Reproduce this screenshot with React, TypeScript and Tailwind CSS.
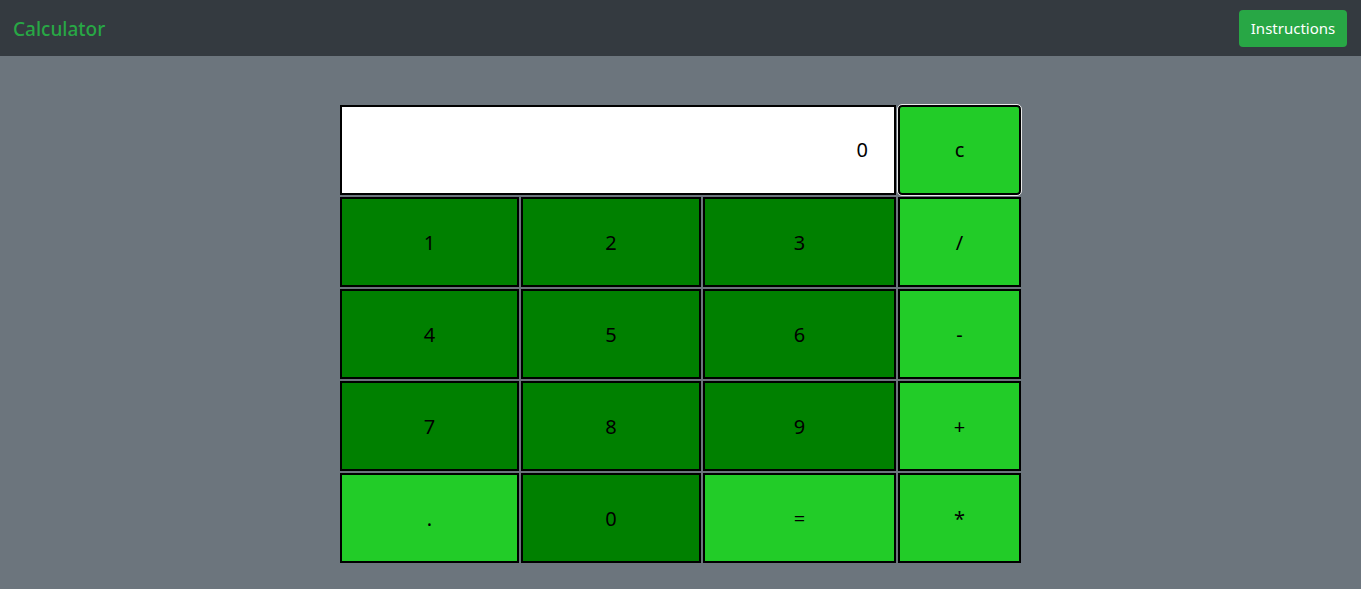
import React from "react";

const dark = "bg-[#008000]";
const light = "bg-[#22cc28]";

type Key = { label: string; tone: "dark" | "light" };

const rows: Key[][] = [
  [
    { label: "1", tone: "dark" },
    { label: "2", tone: "dark" },
    { label: "3", tone: "dark" },
    { label: "/", tone: "light" },
  ],
  [
    { label: "4", tone: "dark" },
    { label: "5", tone: "dark" },
    { label: "6", tone: "dark" },
    { label: "-", tone: "light" },
  ],
  [
    { label: "7", tone: "dark" },
    { label: "8", tone: "dark" },
    { label: "9", tone: "dark" },
    { label: "+", tone: "light" },
  ],
  [
    { label: ".", tone: "light" },
    { label: "0", tone: "dark" },
    { label: "=", tone: "light" },
    { label: "*", tone: "light" },
  ],
];

export default function App() {
  return (
    <div
      className="min-h-[589px] bg-[#6c757d]"
      style={{ fontFamily: '"Noto Sans", "Open Sans", sans-serif' }}
    >
      <nav className="h-14 bg-[#343a40] flex items-center justify-between pl-[13px] pr-[14px]">
        <span className="text-[19px] font-medium text-[#28a745] leading-none pt-[2px]">Calculator</span>
        <button className="h-[37px] w-[108px] rounded-[4px] bg-[#28a745] text-white text-[15px] leading-none">
          Instructions
        </button>
      </nav>
      <div className="flex justify-center pt-[49px]">
        <div className="grid grid-cols-[179px_180px_193px_123px] auto-rows-[90px] gap-[2px]">
          <div className="col-span-3 bg-white border-2 border-black flex items-center justify-end pr-[26px] text-[20px] text-black">
            0
          </div>
          <button className={`${light} border-2 border-black rounded-[4px] outline outline-1 outline-[#e8e8e8] text-[20px] text-black`}>
            c
          </button>
          {rows.flat().map((k, i) => (
            <button
              key={i}
              className={`${k.tone === "dark" ? dark : light} border-2 border-black text-[20px] text-black pt-[2px]`}
            >
              {k.label}
            </button>
          ))}
        </div>
      </div>
    </div>
  );
}
